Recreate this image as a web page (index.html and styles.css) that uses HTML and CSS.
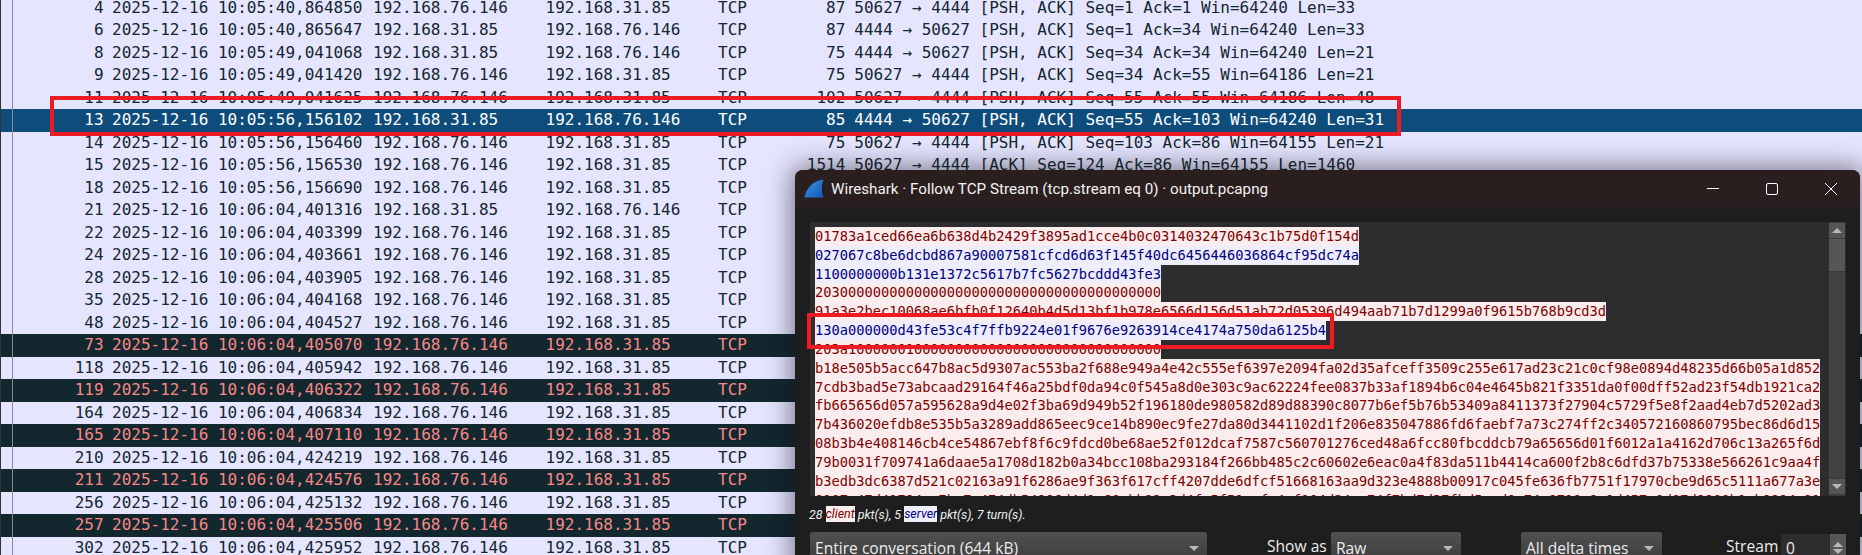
FILE: index.html
```html
<!DOCTYPE html>
<html lang="en">
<head>
<meta charset="utf-8">
<title>Wireshark capture</title>
<link rel="stylesheet" href="styles.css">
</head>
<body>
<div class="page">
  <div class="packets">
    <div class="row"><span class="no">4</span><span>2025-12-16 10:05:40,864850</span><span>192.168.76.146</span><span>192.168.31.85</span><span>TCP</span><span class="len">87</span><span class="info">50627 → 4444 [PSH, ACK] Seq=1 Ack=1 Win=64240 Len=33</span></div>
    <div class="row"><span class="no">6</span><span>2025-12-16 10:05:40,865647</span><span>192.168.31.85</span><span>192.168.76.146</span><span>TCP</span><span class="len">87</span><span class="info">4444 → 50627 [PSH, ACK] Seq=1 Ack=34 Win=64240 Len=33</span></div>
    <div class="row"><span class="no">8</span><span>2025-12-16 10:05:49,041068</span><span>192.168.31.85</span><span>192.168.76.146</span><span>TCP</span><span class="len">75</span><span class="info">4444 → 50627 [PSH, ACK] Seq=34 Ack=34 Win=64240 Len=21</span></div>
    <div class="row"><span class="no">9</span><span>2025-12-16 10:05:49,041420</span><span>192.168.76.146</span><span>192.168.31.85</span><span>TCP</span><span class="len">75</span><span class="info">50627 → 4444 [PSH, ACK] Seq=34 Ack=55 Win=64186 Len=21</span></div>
    <div class="row"><span class="no">11</span><span>2025-12-16 10:05:49,041625</span><span>192.168.76.146</span><span>192.168.31.85</span><span>TCP</span><span class="len">102</span><span class="info">50627 → 4444 [PSH, ACK] Seq=55 Ack=55 Win=64186 Len=48</span></div>
    <div class="row selected"><span class="no">13</span><span>2025-12-16 10:05:56,156102</span><span>192.168.31.85</span><span>192.168.76.146</span><span>TCP</span><span class="len">85</span><span class="info">4444 → 50627 [PSH, ACK] Seq=55 Ack=103 Win=64240 Len=31</span></div>
    <div class="row"><span class="no">14</span><span>2025-12-16 10:05:56,156460</span><span>192.168.76.146</span><span>192.168.31.85</span><span>TCP</span><span class="len">75</span><span class="info">50627 → 4444 [PSH, ACK] Seq=103 Ack=86 Win=64155 Len=21</span></div>
    <div class="row"><span class="no">15</span><span>2025-12-16 10:05:56,156530</span><span>192.168.76.146</span><span>192.168.31.85</span><span>TCP</span><span class="len">1514</span><span class="info">50627 → 4444 [ACK] Seq=124 Ack=86 Win=64155 Len=1460</span></div>
    <div class="row"><span class="no">18</span><span>2025-12-16 10:05:56,156690</span><span>192.168.76.146</span><span>192.168.31.85</span><span>TCP</span></div>
    <div class="row"><span class="no">21</span><span>2025-12-16 10:06:04,401316</span><span>192.168.31.85</span><span>192.168.76.146</span><span>TCP</span></div>
    <div class="row"><span class="no">22</span><span>2025-12-16 10:06:04,403399</span><span>192.168.76.146</span><span>192.168.31.85</span><span>TCP</span></div>
    <div class="row"><span class="no">24</span><span>2025-12-16 10:06:04,403661</span><span>192.168.76.146</span><span>192.168.31.85</span><span>TCP</span></div>
    <div class="row"><span class="no">28</span><span>2025-12-16 10:06:04,403905</span><span>192.168.76.146</span><span>192.168.31.85</span><span>TCP</span></div>
    <div class="row"><span class="no">35</span><span>2025-12-16 10:06:04,404168</span><span>192.168.76.146</span><span>192.168.31.85</span><span>TCP</span></div>
    <div class="row"><span class="no">48</span><span>2025-12-16 10:06:04,404527</span><span>192.168.76.146</span><span>192.168.31.85</span><span>TCP</span></div>
    <div class="row bad"><span class="no">73</span><span>2025-12-16 10:06:04,405070</span><span>192.168.76.146</span><span>192.168.31.85</span><span>TCP</span></div>
    <div class="row"><span class="no">118</span><span>2025-12-16 10:06:04,405942</span><span>192.168.76.146</span><span>192.168.31.85</span><span>TCP</span></div>
    <div class="row bad"><span class="no">119</span><span>2025-12-16 10:06:04,406322</span><span>192.168.76.146</span><span>192.168.31.85</span><span>TCP</span></div>
    <div class="row"><span class="no">164</span><span>2025-12-16 10:06:04,406834</span><span>192.168.76.146</span><span>192.168.31.85</span><span>TCP</span></div>
    <div class="row bad"><span class="no">165</span><span>2025-12-16 10:06:04,407110</span><span>192.168.76.146</span><span>192.168.31.85</span><span>TCP</span></div>
    <div class="row"><span class="no">210</span><span>2025-12-16 10:06:04,424219</span><span>192.168.76.146</span><span>192.168.31.85</span><span>TCP</span></div>
    <div class="row bad"><span class="no">211</span><span>2025-12-16 10:06:04,424576</span><span>192.168.76.146</span><span>192.168.31.85</span><span>TCP</span></div>
    <div class="row"><span class="no">256</span><span>2025-12-16 10:06:04,425132</span><span>192.168.76.146</span><span>192.168.31.85</span><span>TCP</span></div>
    <div class="row bad"><span class="no">257</span><span>2025-12-16 10:06:04,425506</span><span>192.168.76.146</span><span>192.168.31.85</span><span>TCP</span></div>
    <div class="row"><span class="no">302</span><span>2025-12-16 10:06:04,425952</span><span>192.168.76.146</span><span>192.168.31.85</span><span>TCP</span></div>
  </div>
  <div class="edge-line"></div>
  <div class="related-line"></div>

  <section class="window">
    <header class="titlebar">
      <svg class="fin" viewBox="0 0 20 19" aria-hidden="true">
        <defs><linearGradient id="fin" x1="0" y1="0" x2="1" y2="1"><stop offset="0" stop-color="#3b93e6"/><stop offset="1" stop-color="#1559b8"/></linearGradient></defs>
        <path d="M0.5 18.5C2 10 8 2 19.5 0.5C17 6 17.5 13 19.5 18.5Z" fill="url(#fin)"/>
      </svg>
      <span class="title">Wireshark · Follow TCP Stream (tcp.stream eq 0) · output.pcapng</span>
      <div class="controls">
        <svg class="ctl" viewBox="0 0 12 12" aria-hidden="true"><path d="M0 5.5H12" /></svg>
        <svg class="ctl" viewBox="0 0 12 12" aria-hidden="true"><rect x="0.5" y="0.5" width="11" height="11" rx="1.5"/></svg>
        <svg class="ctl" viewBox="0 0 12 12" aria-hidden="true"><path d="M0 0L12 12M12 0L0 12"/></svg>
      </div>
    </header>
    <div class="body">
      <div class="stream">
        <div class="stream-text">
          <div class="c">01783a1ced66ea6b638d4b2429f3895ad1cce4b0c0314032470643c1b75d0f154d</div>
          <div class="s">027067c8be6dcbd867a90007581cfcd6d63f145f40dc6456446036864cf95dc74a</div>
          <div class="s">1100000000b131e1372c5617b7fc5627bcddd43fe3</div>
          <div class="c">203000000000000000000000000000000000000000</div>
          <div class="c">91a3e2bec10068ae6bfb0f12640b4d5d13bf1b978e6566d156d51ab72d05396d494aab71b7d1299a0f9615b768b9cd3d</div>
          <div class="s">130a000000d43fe53c4f7ffb9224e01f9676e9263914ce4174a750da6125b4</div>
          <div class="c">203a10000001000000000000000000000000000000</div>
          <div class="c">b18e505b5acc647b8ac5d9307ac553ba2f688e949a4e42c555ef6397e2094fa02d35afceff3509c255e617ad23c21c0cf98e0894d48235d66b05a1d852</div>
          <div class="c">7cdb3bad5e73abcaad29164f46a25bdf0da94c0f545a8d0e303c9ac62224fee0837b33af1894b6c04e4645b821f3351da0f00dff52ad23f54db1921ca2</div>
          <div class="c">fb665656d057a595628a9d4e02f3ba69d949b52f196180de980582d89d88390c8077b6ef5b76b53409a8411373f27904c5729f5e8f2aad4eb7d5202ad3</div>
          <div class="c">7b436020efdb8e535b5a3289add865eec9ce14b890ec9fe27da80d3441102d1f206e835047886fd6faebf7a73c274ff2c340572160860795bec86d6d15</div>
          <div class="c">08b3b4e408146cb4ce54867ebf8f6c9fdcd0be68ae52f012dcaf7587c560701276ced48a6fcc80fbcddcb79a65656d01f6012a1a4162d706c13a265f6d</div>
          <div class="c">79b0031f709741a6daae5a1708d182b0a34bcc108ba293184f266bb485c2c60602e6eac0a4f83da511b4414ca600f2b8c6dfd37b75338e566261c9aa4f</div>
          <div class="c">b3edb3dc6387d521c02163a91f6286ae9f363f617cff4207dde6dfcf51668163aa9d323e4888b00917c045fe636fb7751f17970cbe9d65c5111a677a3e</div>
          <div class="c">8107c47d41794ae7bc7a474db54906d4d1e60cbb92c3d4fc5f51eafc4cf104d24cc74f7bd7d37fbd5ced0e74c8719e9c1d457e0d07d9900b1cb9994c91</div>
        </div>
        <div class="scrollbar">
          <div class="sb-btn"><i class="tri up"></i></div>
          <div class="sb-thumb"></div>
          <div class="sb-track"></div>
          <div class="sb-btn"><i class="tri down"></i></div>
        </div>
      </div>
      <p class="stats">28 <span class="tag-c">client</span> pkt(s), 5 <span class="tag-s">server</span> pkt(s), 7 turn(s).</p>
      <div class="bottom">
        <div class="combo"><span>Entire conversation (644 kB)</span><i class="tri down"></i></div>
        <span class="label show">Show as</span>
        <div class="combo"><span>Raw</span><i class="tri down"></i></div>
        <span></span>
        <div class="combo"><span>All delta times</span><i class="tri down"></i></div>
        <span class="label stream-label">Stream</span>
        <div class="spin"><span>0</span><div class="spin-btns"><i class="tri up"></i><i class="tri down"></i></div></div>
      </div>
    </div>
  </section>

  <div class="mark mark-row"></div>
  <div class="mark mark-line"></div>
</div>
</body>
</html>
```

FILE: styles.css
```css
* { box-sizing: border-box; }
html, body { margin: 0; height: 100%; overflow: hidden; background: #e6e5ff; }

.page { position: relative; width: 1862px; height: 555px; overflow: hidden; }

/* packet list */
.packets {
  margin-top: -3.5px;
  font: 16px/22.5px "DejaVu Sans Mono", monospace;
  color: #12272e;
}
.row {
  display: grid;
  grid-template-columns: 112px 261px 172.5px 172.5px 62px 74.3px 1fr;
  height: 22.5px;
  white-space: pre;
  background: #e6e5ff;
}
.no { text-align: right; padding-right: 8.4px; }
.len { text-align: right; padding-right: 9px; }
.selected { background: #0e4d7b; color: #fff; }
.bad { background: #12272e; color: #f78787; }

.edge-line { position: absolute; left: 0; top: 0; bottom: 0; width: 1px; background: #333; }
.related-line { position: absolute; left: 12px; top: 0; bottom: 0; width: 1px; background: #8a8a96; }

/* annotation boxes */
.mark { position: absolute; border: 4px solid #ed1c24; }
.mark-row { left: 50px; top: 96px; width: 1351px; height: 40px; }
.mark-line { left: 807px; top: 313px; width: 527px; height: 36px; }

/* follow stream window */
.window {
  position: absolute;
  left: 795px;
  top: 170px;
  width: 1065px;
  height: 400px;
  display: flex;
  flex-direction: column;
  background: #1e1e1e;
  border-radius: 8px 8px 0 0;
  overflow: hidden;
  box-shadow: 0 0 26px 4px rgba(20, 20, 30, .5);
}

.titlebar {
  flex: none;
  height: 37px;
  display: flex;
  align-items: center;
  padding-left: 9px;
  background: #2a1e1e;
}
.fin { width: 20px; height: 19px; flex: none; margin-right: 7px; }
.title { color: #f2f2f2; font: 15.2px Roboto, sans-serif; }
.controls { margin-left: auto; display: flex; gap: 47px; padding-right: 23px; }
.ctl { width: 12px; height: 12px; fill: none; stroke: #fff; stroke-width: 1; display: block; }

.body { flex: 1; padding: 15px 14px 0 15px; display: flex; flex-direction: column; }

.stream { flex: none; height: 274px; display: flex; background: #2d2d2d; padding-right: 1px; }
.stream-text {
  flex: 1;
  min-width: 0;
  padding: 5px 0 0 5px;
  overflow: hidden;
  font: 13.7px/18.83px "DejaVu Sans Mono", monospace;
}
.stream-text div { width: fit-content; height: 18.83px; white-space: pre; }
.c { background: #fbeded; color: #7f0000; }
.s { background: #ededfb; color: #00007f; }

.scrollbar { flex: none; width: 16px; display: flex; flex-direction: column; gap: 1px; padding-top: 1px; padding-bottom: 2px; background: #3a3a3a; }
.sb-btn { height: 15px; background: #565656; display: flex; align-items: center; justify-content: center; }
.sb-thumb { height: 32px; background: #565656; }
.sb-track { flex: 1; background: #424242; }

.tri { display: block; width: 0; height: 0; border-left: 5px solid transparent; border-right: 5px solid transparent; }
.tri.up { border-bottom: 5px solid #b8b8b8; }
.tri.down { border-top: 5px solid #b8b8b8; }

.stats {
  flex: none;
  height: 36px;
  margin: 0 0 0 -1px;
  display: flex;
  align-items: center;
  white-space: pre;
  color: #f0f0f0;
  font: italic 12.4px Roboto, sans-serif;
}
.tag-c { background: #fbeded; color: #7f0000; line-height: 16px; }
.tag-s { background: #ededfb; color: #00007f; line-height: 16px; }

.bottom {
  flex: none;
  display: grid;
  grid-template-columns: 397px 124px 130px 60px 141px 64px 55px 65px;
  height: 32px;
  color: #ececec;
  font: 15.6px/28px "Open Sans", sans-serif;
}
.combo {
  display: flex;
  align-items: center;
  justify-content: space-between;
  padding: 0 8px 0 5px;
  height: 32px;
  background: linear-gradient(#505050, #3c3c3c);
  border-radius: 3px 3px 0 0;
}
.label { display: flex; align-items: center; height: 28px; }
.show { padding-left: 60px; }
.stream-label { grid-column: 7; }
.spin { display: flex; align-items: center; justify-content: space-between; height: 28px; padding-left: 5px; margin-top: 2px; background: #2d2d2d; width: 65px; }
.spin-btns { width: 16px; height: 28px; background: #565656; display: flex; flex-direction: column; align-items: center; justify-content: center; gap: 2px; }
```
